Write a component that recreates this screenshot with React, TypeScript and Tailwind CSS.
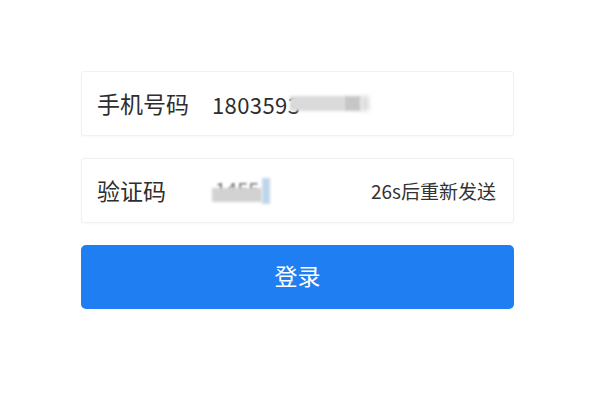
import React from "react";

export default function App() {
  return (
    <div
      className="w-[600px] h-[400px] bg-white overflow-hidden"
      style={{ fontFamily: '"Noto Sans CJK SC", "Noto Sans", sans-serif' }}
    >
      <div className="ml-[81px] w-[433px] pt-[71px] flex flex-col gap-[22px]">
        <div className="h-[65px] bg-white border border-[#f1f1f1] rounded-[3px] shadow-[0_1px_3px_rgba(0,0,0,0.03)] flex items-center px-[15px]">
          <span className="w-[115px] text-[23px] text-[#2e2e2e] leading-none">手机号码</span>
          <div className="flex items-center">
            <span className="text-[22px] text-[#2e2e2e] leading-none tracking-[0.4px]">1803593</span>
            <div className="flex items-center ml-[-10px]">
              <div className="w-[54px] h-[15px] bg-[#dadada] blur-[1.5px]" />
              <div className="w-[17px] h-[15px] bg-[#c6c6c6] blur-[1.5px]" />
              <div className="w-[8px] h-[15px] bg-[#dddddd] blur-[2px]" />
            </div>
          </div>
        </div>
        <div className="h-[65px] bg-white border border-[#f1f1f1] rounded-[3px] shadow-[0_1px_3px_rgba(0,0,0,0.03)] flex items-center px-[15px]">
          <span className="w-[115px] text-[23px] text-[#2e2e2e] leading-none">验证码</span>
          <div className="relative flex items-center h-[30px]">
            <div className="absolute left-[3px] top-[4px] text-[20px] leading-none text-[#333] blur-[0.8px] opacity-70">1455</div>
            <div className="relative w-[50px] h-[14px] bg-[#d2d2d2] blur-[1.5px] mt-[8px]" />
            <div className="relative w-[8px] h-[26px] bg-[#c0d5ea] blur-[1.5px]" />
          </div>
          <span className="ml-auto text-[19px] text-[#333] leading-none mr-[2px]">26s后重新发送</span>
        </div>
        <div className="h-[64px] bg-[#1f7ef1] rounded-[5px] flex items-center justify-center pb-[3px]">
          <span className="text-[23px] text-white leading-none">登录</span>
        </div>
      </div>
    </div>
  );
}
